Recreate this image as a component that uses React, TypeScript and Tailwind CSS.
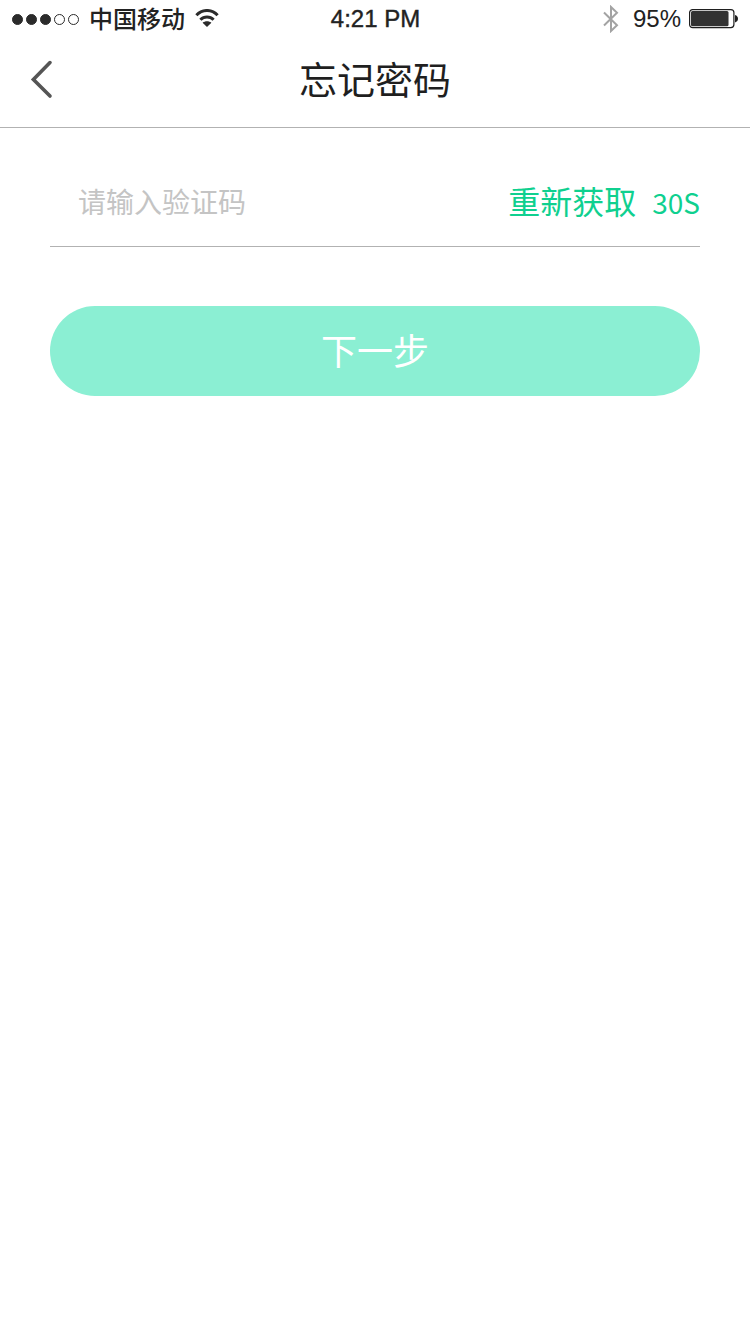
import React, { useState } from 'react';

interface StatusBarProps {
  carrier: string;
  time: string;
  battery: number;
}

const SIGNAL_DOTS = [true, true, true, false, false];

const WifiIcon: React.FC = () => (
  <svg className="w-6 h-5" viewBox="0 0 24 20" fill="none" stroke="#2b2b2b" strokeWidth={3}>
    <path d="M1.4 6.2C7.2 -0.1 16.8 -0.1 22.6 6.2" />
    <path d="M5.4 10.8C9.1 7 14.9 7 18.6 10.8" />
    <path d="M7.6 13.8C10.1 11.8 13.9 11.8 16.4 13.8L12 18Z" fill="#2b2b2b" stroke="none" />
  </svg>
);

const BluetoothIcon: React.FC = () => (
  <svg className="w-4 h-7" viewBox="0 0 16 28" fill="none" stroke="#a3a3a3" strokeWidth={2}>
    <path d="M1 7.5L14 20.2L8 26V2L14 7.8L1 20.5" />
  </svg>
);

const BatteryIcon: React.FC<{ level: number }> = ({ level }) => (
  <svg className="w-[50px] h-5" viewBox="0 0 50 20">
    <rect x="0.6" y="0.6" width="44.3" height="18" rx="3" fill="none" stroke="#1f1f1f" strokeWidth={1.2} />
    <rect x="2" y="2" width={(level / 100) * 39.5} height="15.2" rx="1.5" fill="#333333" />
    <path d="M46 6C50 7 50 12.4 46 13.4Z" fill="#1f1f1f" />
  </svg>
);

const StatusBar: React.FC<StatusBarProps> = ({ carrier, time, battery }) => (
  <div className="grid grid-cols-[1fr_auto_1fr] items-center h-[38px] pl-3 pr-[11px] text-2xl text-[#222222]">
    <div className="flex items-center gap-2.5">
      <div className="flex gap-[3px]">
        {SIGNAL_DOTS.map((filled, index) => (
          <span
            key={index}
            className={`w-[11px] h-[11px] rounded-full border border-[#2b2b2b] ${filled ? 'bg-[#2b2b2b]' : ''}`}
          />
        ))}
      </div>
      <span className="pt-0.5 font-medium leading-6">{carrier}</span>
      <WifiIcon />
    </div>
    <span className="leading-6 [-webkit-text-stroke:0.4px]">{time}</span>
    <div className="flex items-center justify-end">
      <BluetoothIcon />
      <span className="ml-3.5 mr-2 leading-6">{battery}%</span>
      <BatteryIcon level={battery} />
    </div>
  </div>
);

const App: React.FC = () => {
  const [code, setCode] = useState('');

  return (
    <div className="min-h-screen bg-white font-['Liberation_Sans','Noto_Sans_CJK_SC',sans-serif]">
      <header className="border-b border-[#b2b2b2]">
        <StatusBar carrier="中国移动" time="4:21 PM" battery={95} />
        <div className="grid grid-cols-[1fr_auto_1fr] items-center h-[89px] px-[30px] pb-2">
          <button type="button" aria-label="返回" className="justify-self-start">
            <svg className="w-6 h-10" viewBox="0 0 24 40" fill="none" stroke="#555555" strokeWidth={3.6} strokeLinecap="round">
              <path d="M20 3.6L3.4 20.4L20 37" />
            </svg>
          </button>
          <h1 className="pt-1 text-[38px] leading-10 text-[#1f1f1f]">忘记密码</h1>
        </div>
      </header>

      <main className="px-[50px] pt-8">
        <form onSubmit={e => e.preventDefault()}>
          <div className="flex items-center justify-between h-[87px] border-b border-[#b2b2b2]">
            <input
              type="text"
              inputMode="numeric"
              aria-label="验证码"
              placeholder="请输入验证码"
              value={code}
              onChange={e => setCode(e.target.value)}
              className="flex-1 min-w-0 pl-7 pt-0.5 text-[28px] text-[#333333] placeholder:text-[#c4c4c4] focus:outline-none"
            />
            <button type="button" className="flex items-baseline gap-4 pb-0.5 text-[32px] leading-10 text-[#0fd08f]">
              <span>重新获取</span>
              <span className="font-['Noto_Sans_CJK_SC',sans-serif] text-[28px]">30S</span>
            </button>
          </div>
          <button type="submit" className="w-full h-[90px] mt-[59px] pt-1 rounded-full bg-[#8befd3] text-4xl text-white">
            下一步
          </button>
        </form>
      </main>
    </div>
  );
};

export default App;
